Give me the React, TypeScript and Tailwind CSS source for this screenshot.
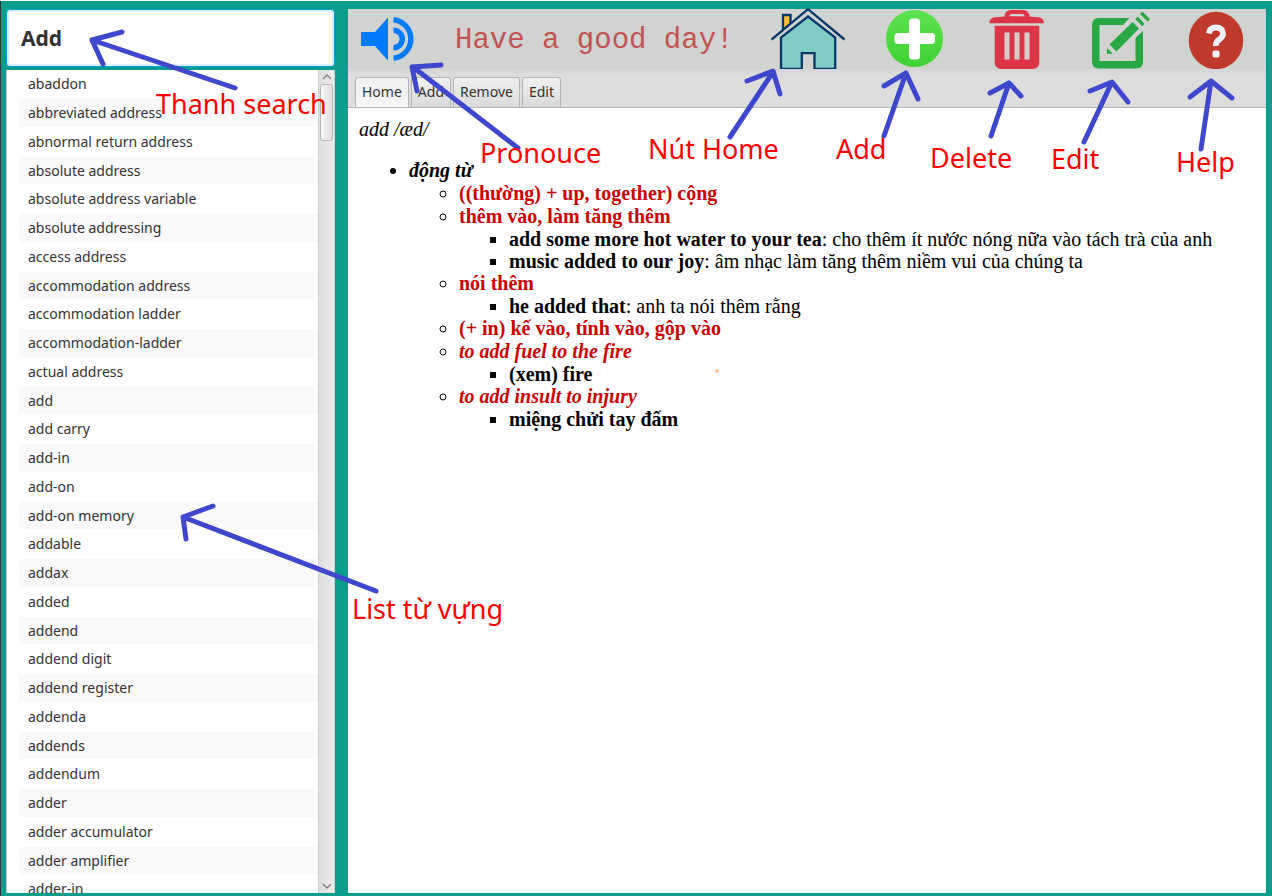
import type { ReactNode } from "react";

const words = [
  "abaddon", "abbreviated address", "abnormal return address", "absolute address",
  "absolute address variable", "absolute addressing", "access address", "accommodation address",
  "accommodation ladder", "accommodation-ladder", "actual address", "add", "add carry", "add-in",
  "add-on", "add-on memory", "addable", "addax", "added", "addend", "addend digit",
  "addend register", "addenda", "addends", "addendum", "adder", "adder accumulator",
  "adder amplifier", "adder-in",
];

type Example = { source: string; meaning?: string };
type Sense = { text: string; idiom?: boolean; examples: Example[] };

const senses: Sense[] = [
  { text: "((thường) + up, together) cộng", examples: [] },
  {
    text: "thêm vào, làm tăng thêm",
    examples: [
      { source: "add some more hot water to your tea", meaning: "cho thêm ít nước nóng nữa vào tách trà của anh" },
      { source: "music added to our joy", meaning: "âm nhạc làm tăng thêm niềm vui của chúng ta" },
    ],
  },
  { text: "nói thêm", examples: [{ source: "he added that", meaning: "anh ta nói thêm rằng" }] },
  { text: "(+ in) kế vào, tính vào, gộp vào", examples: [] },
  { text: "to add fuel to the fire", idiom: true, examples: [{ source: "(xem) fire" }] },
  { text: "to add insult to injury", idiom: true, examples: [{ source: "miệng chửi tay đấm" }] },
];

const notes = [
  { text: "Thanh search", place: "left-[156px] top-[88px]" },
  { text: "Pronouce", place: "left-[480px] top-[137px]" },
  { text: "Nút Home", place: "left-[648px] top-[133px]" },
  { text: "Add", place: "left-[836px] top-[133px]" },
  { text: "Delete", place: "left-[930px] top-[142px]" },
  { text: "Edit", place: "left-[1051px] top-[143px]" },
  { text: "Help", place: "left-[1176px] top-[146px]" },
  { text: "List từ vựng", place: "left-[352px] top-[593px]" },
];

const arrows = [
  "M235 88L92 40M122 32L92 40L103 64",
  "M518 148L413 67M441 65L412 67L417 91",
  "M730 137L773 72M747 81L773 71L780 94",
  "M884 136L906 73M884 86L906 73L918 99",
  "M991 136L1009 83M990 93L1009 83L1021 96",
  "M1084 142L1111 84M1090 91L1112 82L1128 102",
  "M1201 149L1211 81M1190 97L1211 81L1232 98",
  "M376 591L183 517M213 506L183 517L186 539",
];

function VolumeIcon() {
  return (
    <svg className="h-11 w-14" viewBox="0 0 56 44" aria-hidden="true">
      <path fill="#007bff" d="M0 15h14L27 0.5v43L14 29H0z" />
      <path fill="none" stroke="#007bff" strokeWidth="5.4" d="M32.5 2.8a19.3 19.3 0 0 1 0 38.4M32.5 13.2a8.8 8.8 0 0 1 0 17.6" />
    </svg>
  );
}

function HomeIcon() {
  return (
    <svg className="h-[62px] w-[77px]" viewBox="0 0 77 62" aria-hidden="true">
      <g stroke="#04386b" strokeWidth="2.3">
        <path fill="#ffbd30" d="M12 20V7h7.5v9L12 22z" />
        <path fill="#d1d3d0" stroke="none" d="M37 1L1 31l8 0L37 10l28 21h8z" />
        <path fill="#80cbc4" d="M10 61V29.500L37 8.500L64.200 29.500V61H43.500V45.200H30.800V61z" />
        <path fill="none" d="M0.500 31.500L37 1.200L73.500 31.500" />
      </g>
    </svg>
  );
}

function AddIcon() {
  return (
    <svg className="h-[58px] w-[59px]" viewBox="0 0 59 58" aria-hidden="true">
      <defs>
        <linearGradient id="addFill" x1="0" y1="0" x2="0" y2="1">
          <stop offset="0" stopColor="#5ce24f" />
          <stop offset="1" stopColor="#3fd233" />
        </linearGradient>
      </defs>
      <circle cx="28.500" cy="28.500" r="28.500" fill="url(#addFill)" />
      <rect x="8.500" y="23" width="40.500" height="11" rx="3.500" fill="#fff" />
      <rect x="23" y="8.500" width="11" height="41" rx="3.500" fill="#fff" />
    </svg>
  );
}

function TrashIcon() {
  return (
    <svg className="h-[60px] w-[67px]" viewBox="0 0 67 60" aria-hidden="true">
      <path fill="#dc3545" fillRule="evenodd" d="M21.500 7.500Q22 1 28 1H40Q46 1 46.500 7.500L57 8.500q4 1.500 4 5.800H6.300q0-4.300 4-5.800zM26.500 7.300h15q0-2.300-3-2.300h-9q-3 0-3 2.300z" />
      <path fill="#dc3545" d="M11.700 16.700H56.300V53q0 7-7 7H18.700q-7 0-7-7z" />
      <path fill="#d6cfcd" d="M21.500 23.500h5v27h-5zM31.500 23.500h5v27h-5zM41.500 23.500h5v27h-5z" />
    </svg>
  );
}

function EditIcon() {
  return (
    <svg className="h-[60px] w-[62px]" viewBox="0 0 62 60" aria-hidden="true">
      <g fill="#28a745">
        <path d="M41.500 9H11q-7 0-7 7v36.500q0 7 7 7h37q7 0 7-7V22l-7.500 7v23H11.500V16H35z" />
        <path d="M44.700 13L51 19.500L28.500 42.500L21.500 35.500zM19 39l5.800 5.800H19zM47.300 10l2.400-2.400L56.500 15l-2.400 2.200zM52 5l2.200-2.400L62 10.200L59.600 12.500z" />
      </g>
    </svg>
  );
}

function HelpIcon() {
  return (
    <svg className="h-[60px] w-14" viewBox="0 0 56 60" aria-hidden="true">
      <ellipse cx="28" cy="31.500" rx="27.300" ry="28.700" fill="#c0392b" />
      <path fill="none" stroke="#ecf0fa" strokeWidth="5.800" d="M20.800 24.500q.8-6 7.200-6t7 6q0 3.500-3.700 6t-3.500 6.500" />
      <rect x="24.500" y="41.500" width="7" height="7" rx="2" fill="#ecf0fa" />
    </svg>
  );
}

function ToolButton({ label, children }: { label: string; children: ReactNode }) {
  return (
    <button type="button" aria-label={label} className="shrink-0">
      {children}
    </button>
  );
}

function Sidebar() {
  return (
    <aside className="flex min-h-0 w-[329px] shrink-0 flex-col gap-[3px]">
      <input
        type="text"
        aria-label="Search"
        defaultValue="Add"
        className="h-[58px] w-full shrink-0 rounded-sm border border-[#039ed3] bg-white px-[14px] text-[21px] font-bold text-[#333] shadow-[inset_0_0_0_2px_#d9f0fa] outline-none"
      />
      <div className="flex min-h-0 flex-1 border-l border-[#c8c8c8] bg-white">
        <ul className="min-w-0 flex-1 overflow-y-auto pl-3 text-sm text-[#333] [scrollbar-width:none]">
          {words.map((word) => (
            <li key={word} className="flex h-[29px] items-center border-b border-white pl-[9px] even:bg-[#f9f9f9] nth-[4n]:h-7">
              {word}
            </li>
          ))}
        </ul>
        <div className="flex w-[17px] flex-col items-center justify-between border-x border-[#d0d0d0] bg-linear-to-r from-[#dedede] to-[#ececec]">
          <div className="flex w-full flex-col items-center gap-1">
            <button type="button" aria-label="Scroll up" className="flex h-[10px] items-end">
              <svg className="h-[6px] w-[10px]" viewBox="0 0 10 6" aria-hidden="true">
                <path d="M1 5L5 1L9 5" fill="none" stroke="#858585" strokeWidth="1.500" />
              </svg>
            </button>
            <div className="h-[57px] w-[13px] rounded-[3px] border border-[#b5b5b5] bg-linear-to-r from-[#f8f8f8] to-[#dedede]" />
          </div>
          <button type="button" aria-label="Scroll down" className="flex h-[10px] items-start">
            <svg className="h-[6px] w-[10px]" viewBox="0 0 10 6" aria-hidden="true">
              <path d="M1 1L5 5L9 1" fill="none" stroke="#858585" strokeWidth="1.500" />
            </svg>
          </button>
        </div>
      </div>
    </aside>
  );
}

function Toolbar() {
  return (
    <header className="flex h-[60px] shrink-0 items-center bg-[#d1d3d0] pl-[13px] pr-[22px]">
      <ToolButton label="Pronounce"><VolumeIcon /></ToolButton>
      <h1 className="min-w-0 flex-1 whitespace-nowrap pl-[38px] pt-1 font-['Liberation_Mono',monospace] text-[29px] text-[#c25353]">
        Have a good day!
      </h1>
      <div className="flex items-center gap-[38px]">
        <ToolButton label="Home"><HomeIcon /></ToolButton>
        <ToolButton label="Add"><AddIcon /></ToolButton>
        <ToolButton label="Delete"><TrashIcon /></ToolButton>
        <ToolButton label="Edit"><EditIcon /></ToolButton>
        <ToolButton label="Help"><HelpIcon /></ToolButton>
      </div>
    </header>
  );
}

function Tabs() {
  return (
    <div role="tablist" className="flex h-[39px] shrink-0 items-end gap-[2px] border-b border-[#b5b5b5] bg-linear-to-b from-[#d5d5d5] to-[#dddddd] to-20% pl-[7px] text-sm text-[#333]">
      {["Home", "Add", "Remove", "Edit"].map((tab, i) => (
        <button
          key={tab}
          type="button"
          role="tab"
          aria-selected={i === 0}
          className="h-[30px] rounded-t-[3px] border border-b-0 border-[#b5b5b5] bg-linear-to-b from-[#f0f0f0] to-[#dadada] px-[6px] pb-[2px] aria-selected:to-[#f5f5f5]"
        >
          {tab}
        </button>
      ))}
    </div>
  );
}

function Definition() {
  return (
    <article className="min-h-0 flex-1 bg-white px-[11px] pt-[10px] font-['Liberation_Serif',serif] text-xl leading-[23px] text-black">
      <p className="italic">add /æd/</p>
      <ul className="mt-[18px] list-disc pl-[50px]">
        <li>
          <b className="italic">động từ</b>
          <ul className="list-[circle] pl-[50px]">
            {senses.map((sense) => (
              <li key={sense.text}>
                <b className={sense.idiom ? "italic text-[#cc0000]" : "text-[#cc0000]"}>{sense.text}</b>
                {sense.examples.length > 0 && (
                  <ul className="list-[square] pl-[50px] leading-[22px]">
                    {sense.examples.map((example) => (
                      <li key={example.source}>
                        <b>{example.source}</b>
                        {example.meaning && `: ${example.meaning}`}
                      </li>
                    ))}
                  </ul>
                )}
              </li>
            ))}
          </ul>
        </li>
      </ul>
    </article>
  );
}

function Annotations() {
  return (
    <div className="pointer-events-none absolute inset-0 overflow-hidden">
      <svg className="absolute left-0 top-0 h-[896px] w-[1272px]" viewBox="0 0 1272 896" aria-hidden="true">
        <circle cx="717" cy="371" r="2" fill="#ffc0a0" />
        <g fill="none" stroke="#3f48cc" strokeWidth="5" strokeLinecap="round" strokeLinejoin="round">
          {arrows.map((d) => <path key={d} d={d} />)}
        </g>
      </svg>
      {notes.map((note) => (
        <span key={note.place} className={`absolute whitespace-nowrap text-[27px] leading-8 text-[#ff0000] ${note.place}`}>
          {note.text}
        </span>
      ))}
    </div>
  );
}

export default function App() {
  return (
    <div className="relative flex h-screen gap-[13px] overflow-hidden bg-[#0a9d8b] pb-[3px] pl-[6px] pr-[6px] pt-[9px] font-['Noto_Sans',sans-serif] shadow-[inset_0_1px_#ffffff,inset_1px_0_#2b3a3a]">
      <Sidebar />
      <main className="flex min-w-0 flex-1 flex-col">
        <Toolbar />
        <Tabs />
        <Definition />
      </main>
      <Annotations />
    </div>
  );
}
